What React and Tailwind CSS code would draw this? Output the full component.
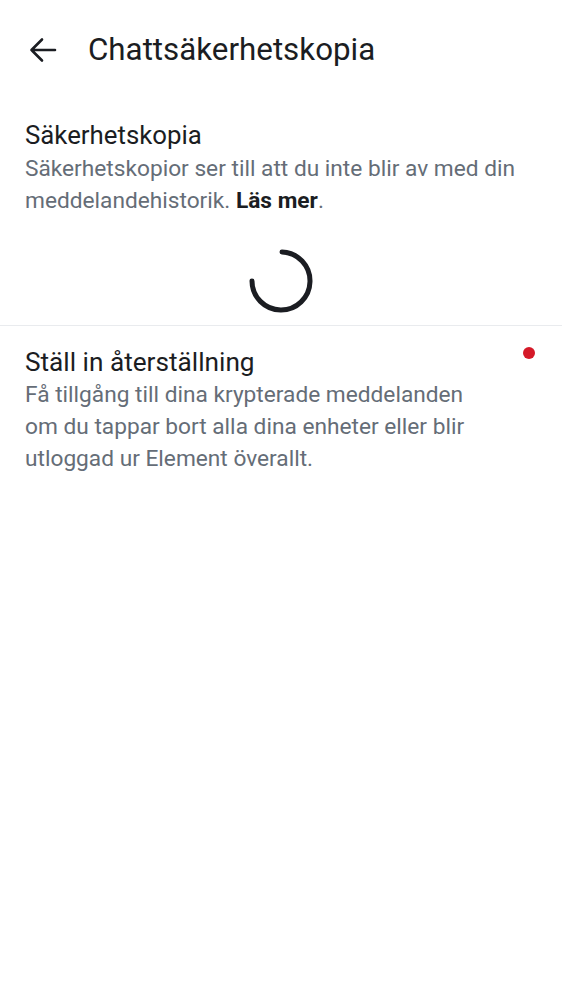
export default function App() {
  return (
    <div
      className="w-[562px] h-[1000px] bg-white text-[#1b1d22]"
      style={{ fontFamily: "Roboto, 'Noto Sans', sans-serif" }}
    >
      {/* top bar */}
      <div className="flex items-center h-[100px] pl-[28px]">
        <svg width="30" height="30" viewBox="0 0 30 30" fill="none">
          <path
            d="M27 15H3.5M14 4.5 3.5 15 14 25.5"
            stroke="#1b1d22"
            strokeWidth="2.6"
            strokeLinecap="round"
            strokeLinejoin="round"
          />
        </svg>
        <h1 className="ml-[30px] text-[31.3px] leading-[40px] font-normal">Chattsäkerhetskopia</h1>
      </div>

      {/* backup section */}
      <div className="px-[25px] pt-[19px]">
        <div className="text-[25.8px] leading-[32px]">Säkerhetskopia</div>
        <p className="mt-[2px] text-[22.7px] leading-[32px] text-[#656d77]">
          Säkerhetskopior ser till att du inte blir av med din meddelandehistorik.{" "}
          <span className="font-bold text-[#1b1d22]">Läs mer</span>.
        </p>
      </div>

      <div className="flex justify-center pt-[31px] pb-[11px]">
        <svg width="66" height="66" viewBox="0 0 66 66">
          <path
            d="M34 4 A29 29 0 1 1 4 33"
            fill="none"
            stroke="#1b1d22"
            strokeWidth="5"
            strokeLinecap="round"
          />
        </svg>
      </div>

      <div className="h-px bg-[#e9ebee]" />

      {/* recovery section */}
      <div className="flex px-[25px] pt-[20px]">
        <div className="w-[465px]">
          <div className="text-[26.2px] leading-[32px]">Ställ in återställning</div>
          <p className="mt-[1px] text-[22.7px] leading-[32px] text-[#656d77]">
            Få tillgång till dina krypterade meddelanden om du tappar bort alla dina enheter eller blir utloggad ur Element överallt.
          </p>
        </div>
        <div className="flex-1 flex justify-end">
          <div className="w-[12px] h-[12px] rounded-full bg-[#d51928] mt-[1px] mr-[2px]" />
        </div>
      </div>
    </div>
  );
}
